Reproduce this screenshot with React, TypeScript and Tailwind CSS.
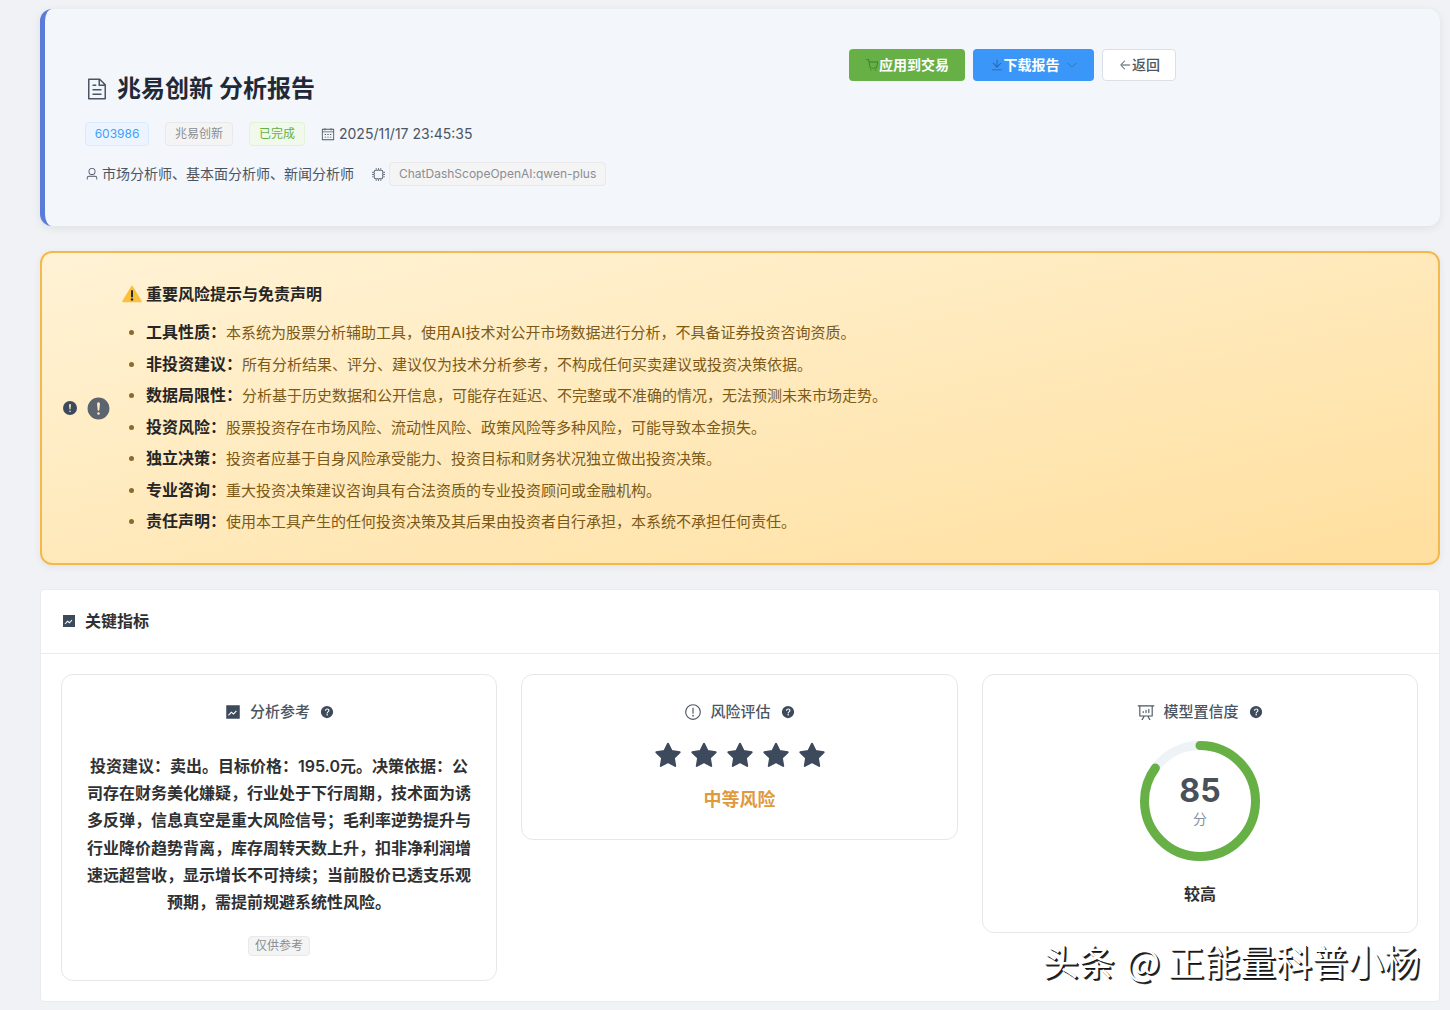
import React from 'react';

// element-plus icon outlines, 1024 grid
const paths = {
  document:
    'M832 384H576V128H192v768h640zm-26.496-64L640 154.496V320zM160 64h480l256 256v608a32 32 0 0 1-32 32H160a32 32 0 0 1-32-32V96a32 32 0 0 1 32-32m160 448h384v64H320zm0-192h160v64H320zm0 384h384v64H320z',
  cart:
    'M432 928a48 48 0 1 1 0-96 48 48 0 0 1 0 96m320 0a48 48 0 1 1 0-96 48 48 0 0 1 0 96M96 128a32 32 0 0 1 0-64h160a32 32 0 0 1 31.36 25.728L320.64 256H928a32 32 0 0 1 31.296 38.72l-96 448A32 32 0 0 1 832 768H384a32 32 0 0 1-31.36-25.728L229.76 128zm314.24 576h395.904l82.304-384H333.44z',
  download:
    'M160 832h704a32 32 0 1 1 0 64H160a32 32 0 1 1 0-64m384-253.696 236.288-236.352 45.248 45.248L508.8 704 192 387.2l45.248-45.248L480 584.704V128h64z',
  arrowDown:
    'M831.872 340.864 512 652.672 192.128 340.864a30.592 30.592 0 0 0-42.752 0 29.12 29.12 0 0 0 0 41.6L489.664 714.24a32 32 0 0 0 44.672 0l340.288-331.712a29.12 29.12 0 0 0 0-41.728 30.592 30.592 0 0 0-42.752 0z',
  back:
    'M224 480h640a32 32 0 1 1 0 64H224a32 32 0 0 1 0-64M237.248 512l265.408 265.344a32 32 0 0 1-45.312 45.312l-288-288a32 32 0 0 1 0-45.312l288-288a32 32 0 1 1 45.312 45.312z',
  calendar:
    'M128 384v512h768V192H768v32a32 32 0 1 1-64 0v-32H320v32a32 32 0 0 1-64 0v-32H128v128h768v64zm192-256h384V96a32 32 0 1 1 64 0v32h160a32 32 0 0 1 32 32v768a32 32 0 0 1-32 32H96a32 32 0 0 1-32-32V160a32 32 0 0 1 32-32h160V96a32 32 0 0 1 64 0zm-32 384h64a32 32 0 0 1 0 64h-64a32 32 0 0 1 0-64m0 192h64a32 32 0 1 1 0 64h-64a32 32 0 1 1 0-64m192-192h64a32 32 0 0 1 0 64h-64a32 32 0 0 1 0-64m0 192h64a32 32 0 1 1 0 64h-64a32 32 0 1 1 0-64m192-192h64a32 32 0 1 1 0 64h-64a32 32 0 1 1 0-64m0 192h64a32 32 0 1 1 0 64h-64a32 32 0 1 1 0-64',
  user:
    'M512 512a192 192 0 1 0 0-384 192 192 0 0 0 0 384m0 64a256 256 0 1 1 0-512 256 256 0 0 1 0 512m320 320v-96a96 96 0 0 0-96-96H288a96 96 0 0 0-96 96v96a32 32 0 1 1-64 0v-96a160 160 0 0 1 160-160h448a160 160 0 0 1 160 160v96a32 32 0 1 1-64 0',
  cpu:
    'M320 256a64 64 0 0 0-64 64v384a64 64 0 0 0 64 64h384a64 64 0 0 0 64-64V320a64 64 0 0 0-64-64zm0-64h384a128 128 0 0 1 128 128v384a128 128 0 0 1-128 128H320a128 128 0 0 1-128-128V320a128 128 0 0 1 128-128M512 64a32 32 0 0 1 32 32v128h-64V96a32 32 0 0 1 32-32m160 0a32 32 0 0 1 32 32v128h-64V96a32 32 0 0 1 32-32m-320 0a32 32 0 0 1 32 32v128h-64V96a32 32 0 0 1 32-32m160 896a32 32 0 0 1-32-32V800h64v128a32 32 0 0 1-32 32m160 0a32 32 0 0 1-32-32V800h64v128a32 32 0 0 1-32 32m-320 0a32 32 0 0 1-32-32V800h64v128a32 32 0 0 1-32 32M64 512a32 32 0 0 1 32-32h128v64H96a32 32 0 0 1-32-32m0-160a32 32 0 0 1 32-32h128v64H96a32 32 0 0 1-32-32m0 320a32 32 0 0 1 32-32h128v64H96a32 32 0 0 1-32-32m896-160a32 32 0 0 1-32 32H800v-64h128a32 32 0 0 1 32 32m0-160a32 32 0 0 1-32 32H800v-64h128a32 32 0 0 1 32 32m0 320a32 32 0 0 1-32 32H800v-64h128a32 32 0 0 1 32 32',
  warningFilled:
    'M512 64a448 448 0 1 1 0 896 448 448 0 0 1 0-896m0 192a58.432 58.432 0 0 0-58.24 63.744l23.36 256.384a35.072 35.072 0 0 0 69.76 0l23.296-256.384A58.432 58.432 0 0 0 512 256m0 512a51.2 51.2 0 1 0 0-102.4 51.2 51.2 0 0 0 0 102.4',
  questionFilled:
    'M512 64a448 448 0 1 1 0 896 448 448 0 0 1 0-896m23.744 191.488c-52.096 0-92.928 14.784-123.2 44.352-30.976 29.568-45.76 70.4-45.76 122.496h80.256c0-29.568 5.632-52.8 17.6-68.992 13.376-19.712 35.2-28.864 66.176-28.864 23.936 0 42.944 6.336 56.32 19.712 12.672 13.376 19.712 31.68 19.712 54.912 0 17.6-6.336 34.496-19.008 49.984l-8.448 9.856c-45.76 40.832-73.216 70.4-82.368 89.408-9.856 19.008-14.08 42.24-14.08 68.992v9.856h80.96v-9.856c0-16.896 3.52-31.68 10.56-45.76 6.336-12.672 15.488-24.64 28.16-35.2 33.792-29.568 54.208-48.576 60.544-55.616 16.896-22.528 26.048-51.392 26.048-86.592 0-42.944-14.08-76.736-42.24-101.376-28.16-25.344-65.472-37.312-111.232-37.312m-12.672 406.208a54.272 54.272 0 0 0-38.72 14.784 49.408 49.408 0 0 0-15.488 38.016c0 15.488 4.928 28.16 15.488 38.016A54.848 54.848 0 0 0 523.072 768c15.488 0 28.16-4.928 39.424-14.784a48.704 48.704 0 0 0 15.488-38.016 49.408 49.408 0 0 0-15.488-38.016 55.04 55.04 0 0 0-39.424-14.784',
  warning:
    'M512 64a448 448 0 1 1 0 896 448 448 0 0 1 0-896m0 832a384 384 0 0 0 0-768 384 384 0 0 0 0 768m48-176a48 48 0 1 1-96 0 48 48 0 0 1 96 0m-48-464a32 32 0 0 1 32 32v288a32 32 0 0 1-64 0V288a32 32 0 0 1 32-32',
  trend:
    'M128 896V128h768v768zm291.712-327.296 128 102.4 180.16-201.792-47.744-42.624-139.84 156.608-128-102.4-180.16 201.792 47.744 42.624z',
  dataAnalysis:
    'm665.216 768 110.848 192h-73.856L591.36 768H433.024L322.176 960H248.32l110.848-192H160a32 32 0 0 1-32-32V192H64a32 32 0 0 1 0-64h896a32 32 0 1 1 0 64h-64v544a32 32 0 0 1-32 32zM832 192H192v512h640zM352 448a32 32 0 0 1 32 32v64a32 32 0 0 1-64 0v-64a32 32 0 0 1 32-32m160-64a32 32 0 0 1 32 32v128a32 32 0 0 1-64 0V416a32 32 0 0 1 32-32m160-64a32 32 0 0 1 32 32v192a32 32 0 1 1-64 0V352a32 32 0 0 1 32-32',
  star:
    'M283.84 867.84 512 747.776l228.16 119.936a6.4 6.4 0 0 0 9.28-6.72l-43.52-254.08 184.512-179.904a6.4 6.4 0 0 0-3.52-10.88l-255.104-37.12L517.76 147.904a6.4 6.4 0 0 0-11.52 0L392.192 379.072l-255.104 37.12a6.4 6.4 0 0 0-3.52 10.88L318.08 606.976l-43.584 254.08a6.4 6.4 0 0 0 9.28 6.72z',
};

const Icon: React.FC<{ name: keyof typeof paths; className?: string }> = ({ name, className }) => (
  <svg viewBox="0 0 1024 1024" fill="currentColor" fillRule="evenodd" className={`shrink-0 ${className ?? ''}`}>
    <path d={paths[name]} />
  </svg>
);

const notices = [
  ['工具性质：', '本系统为股票分析辅助工具，使用AI技术对公开市场数据进行分析，不具备证券投资咨询资质。'],
  ['非投资建议：', '所有分析结果、评分、建议仅为技术分析参考，不构成任何买卖建议或投资决策依据。'],
  ['数据局限性：', '分析基于历史数据和公开信息，可能存在延迟、不完整或不准确的情况，无法预测未来市场走势。'],
  ['投资风险：', '股票投资存在市场风险、流动性风险、政策风险等多种风险，可能导致本金损失。'],
  ['独立决策：', '投资者应基于自身风险承受能力、投资目标和财务状况独立做出投资决策。'],
  ['专业咨询：', '重大投资决策建议咨询具有合法资质的专业投资顾问或金融机构。'],
  ['责任声明：', '使用本工具产生的任何投资决策及其后果由投资者自行承担，本系统不承担任何责任。'],
];

const WarningIcon: React.FC = () => (
  <svg width="20" height="18" viewBox="0 0 20 18" className="shrink-0">
    <path d="M10 1.5 L19 16.5 H1 Z" fill="#fbbf3c" stroke="#fbbf3c" strokeWidth="1.5" strokeLinejoin="round" />
    <rect x="9" y="5" width="2" height="7.5" rx="1" fill="#2b2b2b" />
    <circle cx="10" cy="14.5" r="1.2" fill="#2b2b2b" />
  </svg>
);

const MetricTitle: React.FC<{ icon: React.ReactNode; label: string }> = ({ icon, label }) => (
  <div className="flex h-6 items-center justify-center text-[15px] font-medium text-[#4b5563]">
    {icon}
    <span className="ml-2">{label}</span>
    <Icon name="questionFilled" className="ml-[10px] h-[14px] w-[14px] text-[#3d4a5c]" />
  </div>
);

const ScoreRing: React.FC<{ value: number }> = ({ value }) => {
  const r = 55.5;
  const c = 2 * Math.PI * r;
  return (
    <div className="relative mx-auto mt-[17px] h-[120px] w-[120px]">
      <svg width="120" height="120" viewBox="0 0 120 120" className="-rotate-90">
        <circle cx="60" cy="60" r={r} fill="none" stroke="#eef3f8" strokeWidth="9" />
        <circle
          cx="60"
          cy="60"
          r={r}
          fill="none"
          stroke="#67b045"
          strokeWidth="9"
          strokeLinecap="round"
          strokeDasharray={`${(c * value) / 100} ${c}`}
        />
      </svg>
      <div className="absolute inset-0 flex flex-col items-center justify-center">
        <span className="text-[32px] leading-9 font-bold text-[#4a5058]">{value}</span>
        <span className="text-sm leading-5 text-[#8a8f98]">分</span>
      </div>
    </div>
  );
};

const App: React.FC = () => {
  return (
    <div className="relative min-h-[1010px] bg-[#f0f2f5] pt-[9px] pr-[10px] pb-2 pl-10 font-['Inter','Noto_Sans_CJK_SC',sans-serif] text-[#262626]">
      {/* Header */}
      <div className="h-[217px] rounded-xl border-l-[5px] border-[#5b7bdb] bg-[#f3f6fa] p-10 shadow-[0_2px_10px_rgba(0,0,0,0.08)]">
        <div className="flex w-[1091px] items-start justify-between">
          <div>
            <h1 className="mt-6 flex h-8 items-center text-2xl font-semibold text-[#1f2937]">
              <Icon name="document" className="mr-[8px] h-6 w-6 text-[#4b5563]" />
              兆易创新 分析报告
            </h1>
            <div className="mt-[17px] flex h-6 items-center text-xs">
              <span className="flex h-6 w-16 items-center justify-center rounded border border-[#d9ecff] bg-[#ecf5ff] text-[#409eff]">603986</span>
              <span className="ml-4 flex h-6 w-[68px] items-center justify-center rounded border border-[#e9e9eb] bg-[#f4f4f5] text-[#8a8d93]">兆易创新</span>
              <span className="ml-4 flex h-6 w-14 items-center justify-center rounded border border-[#e1f3d8] bg-[#f0f9eb] text-[#67b045]">已完成</span>
              <span className="ml-4 flex items-center text-sm text-[#4b5563]">
                <Icon name="calendar" className="mr-[4px] h-[14px] w-[14px]" />
                2025/11/17 23:45:35
              </span>
            </div>
            <div className="mt-4 flex h-6 items-center text-sm text-[#4b5563]">
              <Icon name="user" className="mr-[3px] h-[14px] w-[14px]" />
              <span>市场分析师、基本面分析师、新闻分析师</span>
              <Icon name="cpu" className="mr-[3px] ml-[17px] h-[15px] w-[15px]" />
              <span className="flex h-6 items-center rounded border border-[#e9e9eb] bg-[#f4f4f5] px-[9px] text-xs text-[#8a8d93]">
                ChatDashScopeOpenAI:qwen-plus
              </span>
            </div>
          </div>
          <div className="flex items-center gap-2 text-sm font-semibold">
            <button className="flex h-8 w-[116px] items-center justify-center rounded bg-[#67b045] text-white">
              <Icon name="cart" className="h-[14px] w-[14px] text-[#3f7a33]" />
              应用到交易
            </button>
            <button className="flex h-8 w-[121px] items-center justify-center rounded bg-[#3a97f9] text-white">
              <Icon name="download" className="h-[14px] w-[14px] text-[#2d5f9e]" />
              下载报告
              <Icon name="arrowDown" className="ml-[6px] h-3 w-3 text-[#2d6fb8]" />
            </button>
            <button className="flex h-8 w-[74px] items-center justify-center rounded border border-[#dcdfe6] bg-white font-medium text-[#4b5563]">
              <Icon name="back" className="h-[14px] w-[14px]" />
              返回
            </button>
          </div>
        </div>
      </div>

      {/* Risk notice */}
      <div className="mt-[25px] flex h-[314px] items-center rounded-xl border-2 border-[#f5b84a] bg-gradient-to-br from-[#fff3d6] to-[#ffdf9e] pl-5 shadow-[0_2px_8px_rgba(0,0,0,0.06)]">
        <Icon name="warningFilled" className="h-4 w-4 text-[#3d4a5c]" />
        <Icon name="warningFilled" className="ml-[8px] h-[25px] w-[25px] text-[#5c6470]" />
        <div className="ml-[11px] pt-[7px]">
          <div className="flex h-6 items-center text-base font-semibold text-[#262626]">
            <WarningIcon />
            <span className="ml-1">重要风险提示与免责声明</span>
          </div>
          <ul className="mt-[14px] list-disc pl-6 text-[15px] leading-[23.5px] text-[#7c5a16] marker:text-[#8b6a2e]">
            {notices.map(([label, text]) => (
              <li key={label} className="mb-[7px]">
                <strong className="text-base font-semibold text-[#262626]">{label}</strong>
                {text}
              </li>
            ))}
          </ul>
        </div>
      </div>

      {/* Key metrics */}
      <div className="mt-6 rounded border border-[#e8ebef] bg-white">
        <div className="flex h-16 items-center border-b border-[#e8ebef] pb-px pl-5 text-base font-semibold text-[#303133]">
          <Icon name="trend" className="mr-[8px] h-4 w-4 text-[#3d4a5c]" />
          关键指标
        </div>
        <div className="grid grid-cols-[436px_437px_436px] items-start gap-6 p-5">
          <div className="rounded-xl border border-[#e5e7eb] p-6 pt-[25px] text-center">
            <MetricTitle icon={<Icon name="trend" className="h-[18px] w-[18px] text-[#3d4a5c]" />} label="分析参考" />
            <p className="mt-[29px] text-base leading-[27.2px] font-semibold text-[#303133]">
              投资建议：卖出。目标价格：195.0元。决策依据：公司存在财务美化嫌疑，行业处于下行周期，技术面为诱多反弹，信息真空是重大风险信号；毛利率逆势提升与行业降价趋势背离，库存周转天数上升，扣非净利润增速远超营收，显示增长不可持续；当前股价已透支乐观预期，需提前规避系统性风险。
            </p>
            <span className="mt-[20px] inline-flex h-5 items-center rounded border border-[#e9e9eb] bg-[#f4f4f5] px-[6px] text-xs text-[#8a8d93]">仅供参考</span>
          </div>
          <div className="rounded-xl border border-[#e5e7eb] p-6 pt-[25px] pb-[25px] text-center">
            <MetricTitle icon={<Icon name="warning" className="h-[18px] w-[18px] text-[#4b5563]" />} label="风险评估" />
            <div className="mt-[15px] flex justify-center gap-1">
              {[0, 1, 2, 3, 4].map((i) => (
                <svg key={i} viewBox="0 0 1024 1024" fill="#3d4a5c" stroke="#3d4a5c" strokeWidth="50" strokeLinejoin="round" className="h-8 w-8 shrink-0">
                  <path d={paths.star} />
                </svg>
              ))}
            </div>
            <div className="mt-[15px] text-lg leading-7 font-semibold text-[#e09a3c]">中等风险</div>
          </div>
          <div className="rounded-xl border border-[#e5e7eb] p-6 pt-[25px] pb-[26px] text-center">
            <MetricTitle icon={<Icon name="dataAnalysis" className="h-[18px] w-[18px] text-[#4b5563]" />} label="模型置信度" />
            <ScoreRing value={85} />
            <div className="mt-[21px] text-base leading-6 font-semibold text-[#303133]">较高</div>
          </div>
        </div>
      </div>

      {/* Watermark */}
      <div className="absolute top-[936px] right-[30px] font-['Noto_Sans_CJK_SC',sans-serif] text-4xl leading-[48px] font-normal whitespace-pre text-white [word-spacing:3px] [text-shadow:1px_1px_0_#111,2px_2px_0_#333]">
        头条 <span className="mr-2">@</span>正能量科普小杨
      </div>
    </div>
  );
};

export default App;
